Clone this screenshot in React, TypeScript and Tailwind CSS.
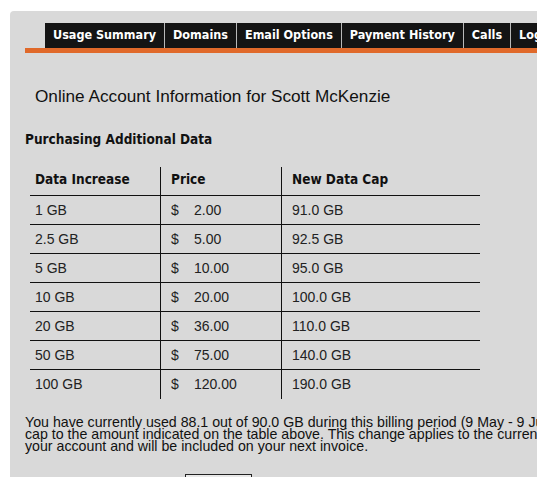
import React from "react";

const tabs = ["Usage Summary", "Domains", "Email Options", "Payment History", "Calls", "Logout"];

const rows: [string, string, string][] = [
  ["1 GB", "2.00", "91.0 GB"],
  ["2.5 GB", "5.00", "92.5 GB"],
  ["5 GB", "10.00", "95.0 GB"],
  ["10 GB", "20.00", "100.0 GB"],
  ["20 GB", "36.00", "110.0 GB"],
  ["50 GB", "75.00", "140.0 GB"],
  ["100 GB", "120.00", "190.0 GB"],
];

const bold = "font-['DejaVu_Sans_Condensed','DejaVu_Sans',sans-serif] font-bold";

export default function App() {
  return (
    <div className="w-[537px] h-[477px] overflow-hidden bg-white">
      <div className="ml-[10px] mt-[11px] w-[700px] h-[500px] bg-[#d9d9d9] rounded-tl-[4px] pt-[12px]">
        {/* tab bar */}
        <div className={"ml-[35px] flex h-[25px] bg-[#141414] text-[12.5px] text-white " + bold}>
          {tabs.map((t, i) => (
            <div
              key={t}
              className={
                "flex items-center px-[8px] " +
                (i > 0 ? "border-l border-[#b8b8b8]" : "")
              }
            >
              {t}
            </div>
          ))}
        </div>
        <div className="ml-[15px] h-[5px] bg-[#e0692a]" />

        <div className="font-['Liberation_Sans',Arial,sans-serif]">
          <h1 className="ml-[25px] mt-[33px] text-[17.2px] leading-[20px] text-[#111]">
            Online Account Information for Scott McKenzie
          </h1>
          <h2 className={"ml-[15px] mt-[25px] text-[13.5px] leading-[16px] text-[#111] " + bold}>
            Purchasing Additional Data
          </h2>

          <div className="ml-[20px] mt-[20px] w-[450px] text-[14px] text-[#222]">
            <div className="grid grid-cols-[130px_121px_199px]">
              <div className={"h-[29px] flex items-end pb-[6px] pl-[5px] border-b border-[#111] text-[13.5px] text-[#111] " + bold}>
                Data Increase
              </div>
              <div className={"h-[29px] flex items-end pb-[6px] pl-[10px] border-b border-l border-[#111] text-[13.5px] text-[#111] " + bold}>
                Price
              </div>
              <div className={"h-[29px] flex items-end pb-[6px] pl-[10px] border-b border-l border-[#111] text-[13.5px] text-[#111] " + bold}>
                New Data Cap
              </div>
              {rows.map((r, i) => {
                const last = i === rows.length - 1;
                const b = last ? "" : " border-b border-[#111]";
                return (
                  <React.Fragment key={r[0]}>
                    <div className={"h-[29px] flex items-center pl-[5px]" + b}>{r[0]}</div>
                    <div className={"h-[29px] flex items-center pl-[10px] border-l border-[#111]" + b}>
                      <span className="w-[23px]">$</span>
                      <span>{r[1]}</span>
                    </div>
                    <div className={"h-[29px] flex items-center pl-[10px] border-l border-[#111]" + b}>{r[2]}</div>
                  </React.Fragment>
                );
              })}
            </div>
          </div>

          <p className="ml-[15px] mt-[17px] whitespace-nowrap text-[14.2px] leading-[12px] text-[#111]">
            You have currently used 88.1 out of 90.0 GB during this billing period (9 May - 9 June). You may increase your data
            <br />
            cap to the amount indicated on the table above. This change applies to the current billing period for
            <br />
            your account and will be included on your next invoice.
          </p>

          <div className="ml-[175px] mt-[22px] w-[67px] h-[24px] border border-[#222] bg-[#e8e8e8]" />
        </div>
      </div>
    </div>
  );
}
